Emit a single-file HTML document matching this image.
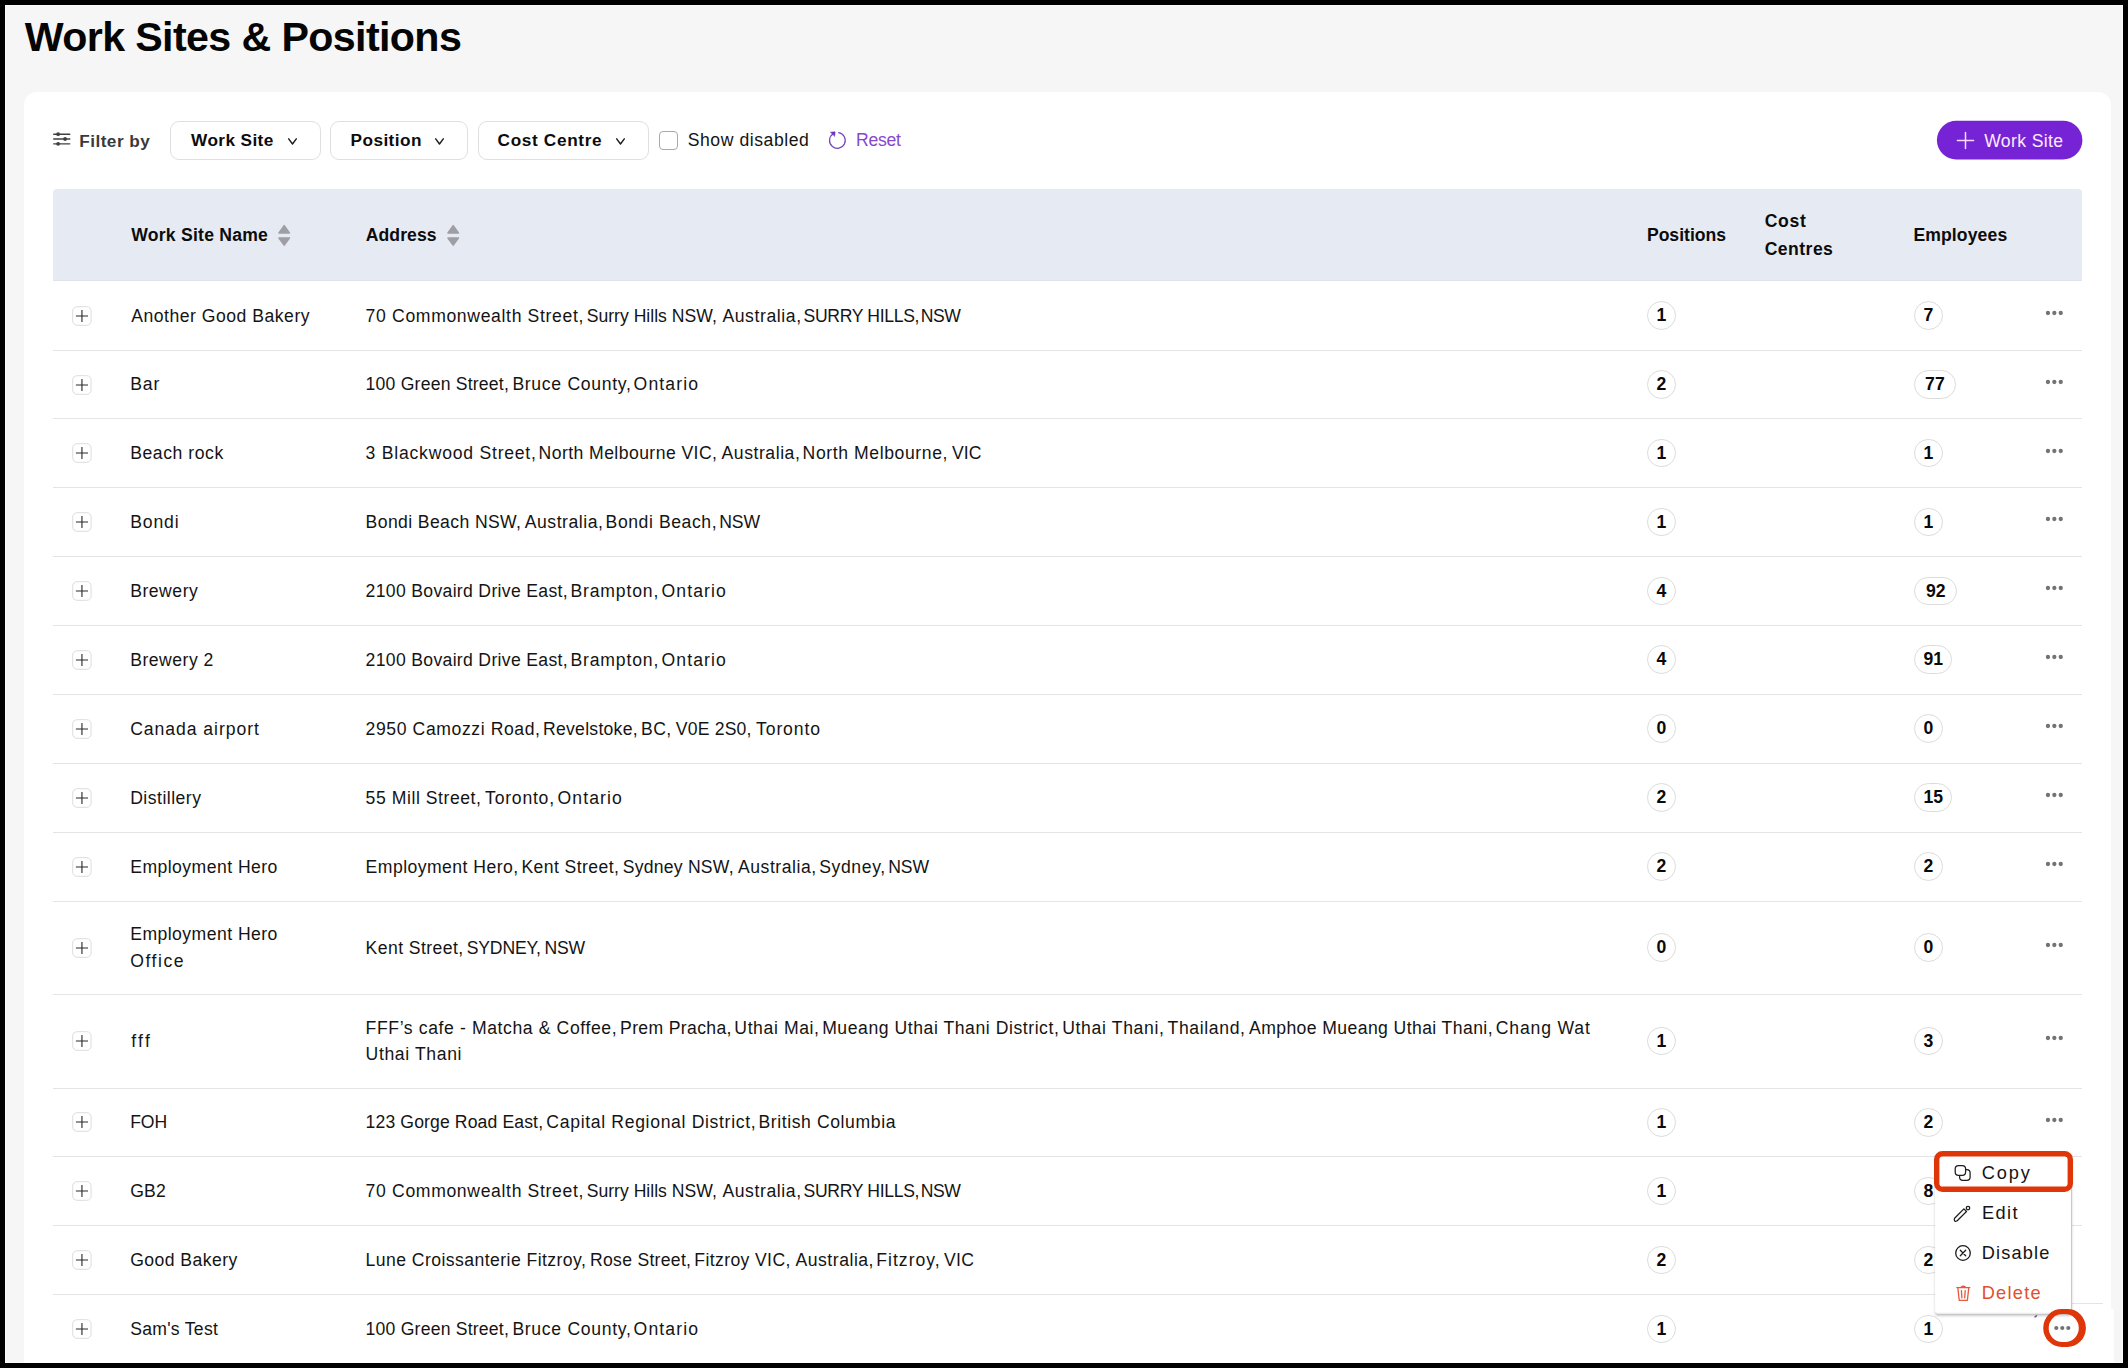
<!DOCTYPE html>
<html lang="en">
<head>
<meta charset="utf-8">
<title>Work Sites &amp; Positions</title>
<style>
*{box-sizing:border-box;margin:0;padding:0}
html,body{width:2128px;height:1368px;overflow:hidden;background:#000}
body{position:relative;font-family:"Liberation Sans",sans-serif;color:#141414;font-size:17.6px}
.page{position:absolute;left:5px;top:5px;width:2118px;height:1358px;background:#f6f6f6;overflow:hidden;box-shadow:inset 1px 1px 0 #fcfcfc,inset -1px -1px 0 #fcfcfc}
.page *{position:absolute}
.g{left:0;top:0;width:0;height:0}
.card{left:19px;top:86.5px;width:2087px;height:1300px;background:#fff;border-radius:13px 13px 0 0}
.cardx{left:2100px;top:1304px;width:8.5px;height:60px;background:#fff}
.tx{white-space:pre;line-height:24px;height:24px;font-weight:400;font-style:normal}
.fbtn{top:116px;height:38.5px;border:1px solid #dfdfdf;border-radius:9px;background:#fff}
.chk{left:654px;top:125.8px;width:19.2px;height:19.2px;border:1.2px solid #a9a9a9;border-radius:4px;background:#fff}
.theadbg{left:48px;top:184.3px;width:2029px;height:92px;background:#e6eaf2;border-radius:4px 4px 0 0;box-shadow:inset 0 -1px 0 #e0e4ea}
.sep{left:48px;width:2029px;height:1px;background:#e4e4e5}
.bdg{height:28.8px;border:1px solid #dcdcdc;border-radius:15px;background:#fff;font-weight:700;font-size:17.6px;line-height:26.8px;text-align:center;color:#0a0a0a}
.menubg{left:1929.7px;top:1147px;width:136.6px;height:162px;background:#fff;border-radius:3px;box-shadow:1px 1px 0 -0.2px #c4c5c9,0.5px 1.5px 2.5px rgba(0,0,0,.2),inset 0 -1.5px 1.5px -0.6px rgba(0,0,0,.1)}
svg{overflow:visible}
</style>
</head>
<body>
<div class="page">
<header class="g"><h1 class="tx title" style="left:19.70px;top:20.12px;letter-spacing:-0.619px;font-size:41.2px;font-weight:700;color:#050505">Work Sites &amp; Positions</h1></header>
<main class="g">
<div class="card"></div>
<div class="cardx"></div>
<section class="g filters">
<svg style="left:47.5px;top:126px" width="18" height="16" viewBox="0 0 18 16" fill="none" stroke="#404040" stroke-width="1.35" stroke-linecap="round"><path d="M0.7 3.2H16.8M0.7 8H16.8M0.7 12.8H16.8"/><circle cx="5.1" cy="3.2" r="1.9" fill="#404040" stroke="none"/><circle cx="12.1" cy="8" r="1.9" fill="#404040" stroke="none"/><circle cx="5.1" cy="12.8" r="1.9" fill="#404040" stroke="none"/></svg>
<span class="tx" style="left:74.20px;top:124.04px;letter-spacing:0.475px;font-size:17.2px;font-weight:700;color:#3a3a3a">Filter by</span>
<div class="g dd">
<div class="fbtn" style="left:165.2px;width:150.6px"></div>
<span class="tx" style="left:186.10px;top:122.74px;letter-spacing:0.400px;font-size:17.2px;font-weight:700;color:#0c0c0c">Work Site</span>
<svg style="left:283.4px;top:132.5px" width="9" height="7" viewBox="0 0 9 7" fill="none" stroke="#1a1a1a" stroke-width="1.4" stroke-linecap="round" stroke-linejoin="round"><path d="M0.7 0.8L4.5 6L8.3 0.8"/></svg>
</div>
<div class="g dd">
<div class="fbtn" style="left:325.4px;width:137.4px"></div>
<span class="tx" style="left:345.50px;top:122.74px;letter-spacing:0.457px;font-size:17.2px;font-weight:700;color:#0c0c0c">Position</span>
<svg style="left:430.4px;top:132.5px" width="9" height="7" viewBox="0 0 9 7" fill="none" stroke="#1a1a1a" stroke-width="1.4" stroke-linecap="round" stroke-linejoin="round"><path d="M0.7 0.8L4.5 6L8.3 0.8"/></svg>
</div>
<div class="g dd">
<div class="fbtn" style="left:473.2px;width:170.5px"></div>
<span class="tx" style="left:492.60px;top:122.74px;letter-spacing:0.660px;font-size:17.2px;font-weight:700;color:#0c0c0c">Cost Centre</span>
<svg style="left:610.7px;top:132.5px" width="9" height="7" viewBox="0 0 9 7" fill="none" stroke="#1a1a1a" stroke-width="1.4" stroke-linecap="round" stroke-linejoin="round"><path d="M0.7 0.8L4.5 6L8.3 0.8"/></svg>
</div>
<label class="g"><span class="chk"></span><span class="tx" style="left:682.70px;top:122.50px;letter-spacing:0.558px">Show disabled</span></label>
<div class="g reset"><svg style="left:815px;top:119px" width="36" height="32" viewBox="0 0 36 32" fill="none" stroke="#7747b8" stroke-width="1.25" stroke-linecap="round"><path d="M18.63 8.65A7.85 7.85 0 1 1 13.24 9.74"/><path d="M10.7 8.2L15.1 7.85L14.7 12Z" fill="#6a2fc0" stroke="#6a2fc0" stroke-width="0.6" stroke-linejoin="round"/></svg>
<span class="tx" style="left:851.00px;top:123.10px;letter-spacing:-0.250px;color:#8748cf">Reset</span></div>
<div class="g add"><svg style="left:1930px;top:114px" width="150" height="44" viewBox="0 0 150 44"><rect x="1.9" y="1.8" width="145.5" height="38.7" rx="19.35" fill="#7623d6"/></svg>
<svg style="left:1951.7px;top:127.1px" width="17" height="17" viewBox="0 0 17 17" stroke="#fbdcff" stroke-width="1.5" stroke-linecap="round"><path d="M8.5 0.4V16.6M0.4 8.5H16.6"/></svg>
<span class="tx" style="left:1979.20px;top:123.60px;letter-spacing:0.375px;color:#fdeaff">Work Site</span></div>
</section>
<section class="g table">
<div class="g thead"><div class="theadbg"></div>
<span class="tx" style="left:126.20px;top:217.90px;letter-spacing:0.238px;font-weight:700;color:#0c0c0c">Work Site Name</span>
<svg style='left:272.70px;top:219.20px' width='12.4' height='23' viewBox='0 0 12.4 23' fill='#9e9ea4' stroke='#9e9ea4' stroke-width='1.6' stroke-linejoin='round'><path d='M6.2 1.7L11.4 8.9H1Z'/><path d='M6.2 21.1L11.4 14H1Z'/></svg>
<span class="tx" style="left:360.80px;top:217.90px;letter-spacing:0.050px;font-weight:700;color:#0c0c0c">Address</span>
<svg style='left:441.50px;top:219.20px' width='12.4' height='23' viewBox='0 0 12.4 23' fill='#9e9ea4' stroke='#9e9ea4' stroke-width='1.6' stroke-linejoin='round'><path d='M6.2 1.7L11.4 8.9H1Z'/><path d='M6.2 21.1L11.4 14H1Z'/></svg>
<span class="tx" style="left:1641.90px;top:217.90px;letter-spacing:0.000px;font-weight:700;color:#0c0c0c">Positions</span>
<div class="g"><span class="tx" style="left:1759.70px;top:204.20px;letter-spacing:0.700px;font-weight:700;color:#0c0c0c">Cost </span><span class="tx" style="left:1759.70px;top:231.70px;letter-spacing:0.450px;font-weight:700;color:#0c0c0c">Centres</span></div>
<span class="tx" style="left:1908.40px;top:217.90px;letter-spacing:0.112px;font-weight:700;color:#0c0c0c">Employees</span>
</div>
<div class="g tbody">
<div class="g row">
<svg class='exp' style='left:66.00px;top:299.75px' width='22' height='22' viewBox='0 0 22 22' fill='none'><rect x='1.7' y='1.7' width='18.4' height='18.6' rx='4.4' fill='#fff' stroke='#dddddd' stroke-width='1'/><path d='M4.9 11H17M10.95 4.9V17.1' stroke='#2a2a2a' stroke-width='1.12'/></svg>
<span class="tx" style="left:126.20px;top:298.80px;letter-spacing:0.511px">Another Good Bakery</span>
<div class="g addr">
<span class="tx" style="left:360.62px;top:298.80px;letter-spacing:0.652px">70 Commonwealth Street, </span>
<span class="tx" style="left:581.67px;top:298.80px;letter-spacing:0.008px">Surry Hills NSW, </span>
<span class="tx" style="left:717.41px;top:298.80px;letter-spacing:0.588px">Australia, </span>
<span class="tx" style="left:798.51px;top:298.80px;letter-spacing:-0.329px">SURRY HILLS, </span>
<span class="tx" style="left:915.80px;top:298.80px;letter-spacing:-0.451px">NSW</span>
</div>
<div class='bdg' style='left:1642.00px;top:296.15px;width:28.8px'>1</div>
<div class='bdg' style='left:1909.10px;top:296.15px;width:28.8px'>7</div>
<svg class='dots' style='left:2038.00px;top:303.95px' width='24' height='8' viewBox='0 0 24 8' fill='#737373'><circle cx='4.95' cy='4' r='2.15'/><circle cx='11.35' cy='4' r='2.15'/><circle cx='17.75' cy='4' r='2.15'/></svg>
<div class='sep' style='top:345px'></div>
</div>
<div class="g row">
<svg class='exp' style='left:66.00px;top:368.55px' width='22' height='22' viewBox='0 0 22 22' fill='none'><rect x='1.7' y='1.7' width='18.4' height='18.6' rx='4.4' fill='#fff' stroke='#dddddd' stroke-width='1'/><path d='M4.9 11H17M10.95 4.9V17.1' stroke='#2a2a2a' stroke-width='1.12'/></svg>
<span class="tx" style="left:125.20px;top:366.80px;letter-spacing:0.900px">Bar</span>
<div class="g addr">
<span class="tx" style="left:360.62px;top:366.80px;letter-spacing:0.210px">100 Green Street, </span>
<span class="tx" style="left:507.38px;top:366.80px;letter-spacing:0.699px">Bruce County, </span>
<span class="tx" style="left:628.59px;top:366.80px;letter-spacing:1.143px">Ontario</span>
</div>
<div class='bdg' style='left:1642.00px;top:364.95px;width:28.8px'>2</div>
<div class='bdg' style='left:1909.10px;top:364.95px;width:41.6px'>77</div>
<svg class='dots' style='left:2038.00px;top:372.75px' width='24' height='8' viewBox='0 0 24 8' fill='#737373'><circle cx='4.95' cy='4' r='2.15'/><circle cx='11.35' cy='4' r='2.15'/><circle cx='17.75' cy='4' r='2.15'/></svg>
<div class='sep' style='top:413px'></div>
</div>
<div class="g row">
<svg class='exp' style='left:66.00px;top:437.30px' width='22' height='22' viewBox='0 0 22 22' fill='none'><rect x='1.7' y='1.7' width='18.4' height='18.6' rx='4.4' fill='#fff' stroke='#dddddd' stroke-width='1'/><path d='M4.9 11H17M10.95 4.9V17.1' stroke='#2a2a2a' stroke-width='1.12'/></svg>
<span class="tx" style="left:125.20px;top:435.90px;letter-spacing:0.556px">Beach rock</span>
<div class="g addr">
<span class="tx" style="left:360.62px;top:435.90px;letter-spacing:0.768px">3 Blackwood Street, </span>
<span class="tx" style="left:533.55px;top:435.90px;letter-spacing:0.434px">North Melbourne VIC, </span>
<span class="tx" style="left:716.50px;top:435.90px;letter-spacing:0.555px">Australia, </span>
<span class="tx" style="left:797.61px;top:435.90px;letter-spacing:0.590px">North Melbourne, </span>
<span class="tx" style="left:946.88px;top:435.90px;letter-spacing:0.135px">VIC</span>
</div>
<div class='bdg' style='left:1642.00px;top:433.70px;width:28.8px'>1</div>
<div class='bdg' style='left:1909.10px;top:433.70px;width:28.8px'>1</div>
<svg class='dots' style='left:2038.00px;top:441.50px' width='24' height='8' viewBox='0 0 24 8' fill='#737373'><circle cx='4.95' cy='4' r='2.15'/><circle cx='11.35' cy='4' r='2.15'/><circle cx='17.75' cy='4' r='2.15'/></svg>
<div class='sep' style='top:482px'></div>
</div>
<div class="g row">
<svg class='exp' style='left:66.00px;top:506.20px' width='22' height='22' viewBox='0 0 22 22' fill='none'><rect x='1.7' y='1.7' width='18.4' height='18.6' rx='4.4' fill='#fff' stroke='#dddddd' stroke-width='1'/><path d='M4.9 11H17M10.95 4.9V17.1' stroke='#2a2a2a' stroke-width='1.12'/></svg>
<span class="tx" style="left:125.20px;top:504.80px;letter-spacing:0.875px">Bondi</span>
<div class="g addr">
<span class="tx" style="left:360.62px;top:504.80px;letter-spacing:0.385px">Bondi Beach NSW, </span>
<span class="tx" style="left:519.81px;top:504.80px;letter-spacing:0.521px">Australia, </span>
<span class="tx" style="left:600.62px;top:504.80px;letter-spacing:0.570px">Bondi Beach, </span>
<span class="tx" style="left:714.30px;top:504.80px;letter-spacing:-0.150px">NSW</span>
</div>
<div class='bdg' style='left:1642.00px;top:502.60px;width:28.8px'>1</div>
<div class='bdg' style='left:1909.10px;top:502.60px;width:28.8px'>1</div>
<svg class='dots' style='left:2038.00px;top:510.40px' width='24' height='8' viewBox='0 0 24 8' fill='#737373'><circle cx='4.95' cy='4' r='2.15'/><circle cx='11.35' cy='4' r='2.15'/><circle cx='17.75' cy='4' r='2.15'/></svg>
<div class='sep' style='top:551px'></div>
</div>
<div class="g row">
<svg class='exp' style='left:66.00px;top:575.15px' width='22' height='22' viewBox='0 0 22 22' fill='none'><rect x='1.7' y='1.7' width='18.4' height='18.6' rx='4.4' fill='#fff' stroke='#dddddd' stroke-width='1'/><path d='M4.9 11H17M10.95 4.9V17.1' stroke='#2a2a2a' stroke-width='1.12'/></svg>
<span class="tx" style="left:125.20px;top:573.90px;letter-spacing:0.517px">Brewery</span>
<div class="g addr">
<span class="tx" style="left:360.62px;top:573.90px;letter-spacing:0.322px">2100 Bovaird Drive East, </span>
<span class="tx" style="left:565.43px;top:573.90px;letter-spacing:0.839px">Brampton, </span>
<span class="tx" style="left:656.56px;top:573.90px;letter-spacing:1.093px">Ontario</span>
</div>
<div class='bdg' style='left:1642.00px;top:571.55px;width:28.8px'>4</div>
<div class='bdg' style='left:1909.10px;top:571.55px;width:43.4px'>92</div>
<svg class='dots' style='left:2038.00px;top:579.35px' width='24' height='8' viewBox='0 0 24 8' fill='#737373'><circle cx='4.95' cy='4' r='2.15'/><circle cx='11.35' cy='4' r='2.15'/><circle cx='17.75' cy='4' r='2.15'/></svg>
<div class='sep' style='top:620px'></div>
</div>
<div class="g row">
<svg class='exp' style='left:66.00px;top:644.00px' width='22' height='22' viewBox='0 0 22 22' fill='none'><rect x='1.7' y='1.7' width='18.4' height='18.6' rx='4.4' fill='#fff' stroke='#dddddd' stroke-width='1'/><path d='M4.9 11H17M10.95 4.9V17.1' stroke='#2a2a2a' stroke-width='1.12'/></svg>
<span class="tx" style="left:125.20px;top:642.70px;letter-spacing:0.500px">Brewery 2</span>
<div class="g addr">
<span class="tx" style="left:360.62px;top:642.70px;letter-spacing:0.322px">2100 Bovaird Drive East, </span>
<span class="tx" style="left:565.43px;top:642.70px;letter-spacing:0.839px">Brampton, </span>
<span class="tx" style="left:656.56px;top:642.70px;letter-spacing:1.093px">Ontario</span>
</div>
<div class='bdg' style='left:1642.00px;top:640.40px;width:28.8px'>4</div>
<div class='bdg' style='left:1909.10px;top:640.40px;width:38.2px'>91</div>
<svg class='dots' style='left:2038.00px;top:648.20px' width='24' height='8' viewBox='0 0 24 8' fill='#737373'><circle cx='4.95' cy='4' r='2.15'/><circle cx='11.35' cy='4' r='2.15'/><circle cx='17.75' cy='4' r='2.15'/></svg>
<div class='sep' style='top:689px'></div>
</div>
<div class="g row">
<svg class='exp' style='left:66.00px;top:712.80px' width='22' height='22' viewBox='0 0 22 22' fill='none'><rect x='1.7' y='1.7' width='18.4' height='18.6' rx='4.4' fill='#fff' stroke='#dddddd' stroke-width='1'/><path d='M4.9 11H17M10.95 4.9V17.1' stroke='#2a2a2a' stroke-width='1.12'/></svg>
<span class="tx" style="left:125.20px;top:711.80px;letter-spacing:0.946px">Canada airport</span>
<div class="g addr">
<span class="tx" style="left:360.62px;top:711.80px;letter-spacing:0.590px">2950 Camozzi Road, </span>
<span class="tx" style="left:538.06px;top:711.80px;letter-spacing:0.263px">Revelstoke, </span>
<span class="tx" style="left:636.11px;top:711.80px;letter-spacing:0.335px">BC, </span>
<span class="tx" style="left:670.79px;top:711.80px;letter-spacing:0.184px">V0E 2S0, </span>
<span class="tx" style="left:751.09px;top:711.80px;letter-spacing:0.860px">Toronto</span>
</div>
<div class='bdg' style='left:1642.00px;top:709.20px;width:28.8px'>0</div>
<div class='bdg' style='left:1909.10px;top:709.20px;width:28.8px'>0</div>
<svg class='dots' style='left:2038.00px;top:717.00px' width='24' height='8' viewBox='0 0 24 8' fill='#737373'><circle cx='4.95' cy='4' r='2.15'/><circle cx='11.35' cy='4' r='2.15'/><circle cx='17.75' cy='4' r='2.15'/></svg>
<div class='sep' style='top:758px'></div>
</div>
<div class="g row">
<svg class='exp' style='left:66.00px;top:781.70px' width='22' height='22' viewBox='0 0 22 22' fill='none'><rect x='1.7' y='1.7' width='18.4' height='18.6' rx='4.4' fill='#fff' stroke='#dddddd' stroke-width='1'/><path d='M4.9 11H17M10.95 4.9V17.1' stroke='#2a2a2a' stroke-width='1.12'/></svg>
<span class="tx" style="left:125.20px;top:780.90px;letter-spacing:0.478px">Distillery</span>
<div class="g addr">
<span class="tx" style="left:360.62px;top:780.90px;letter-spacing:0.556px">55 Mill Street, </span>
<span class="tx" style="left:480.11px;top:780.90px;letter-spacing:0.767px">Toronto, </span>
<span class="tx" style="left:552.50px;top:780.90px;letter-spacing:1.093px">Ontario</span>
</div>
<div class='bdg' style='left:1642.00px;top:778.10px;width:28.8px'>2</div>
<div class='bdg' style='left:1909.10px;top:778.10px;width:38.2px'>15</div>
<svg class='dots' style='left:2038.00px;top:785.90px' width='24' height='8' viewBox='0 0 24 8' fill='#737373'><circle cx='4.95' cy='4' r='2.15'/><circle cx='11.35' cy='4' r='2.15'/><circle cx='17.75' cy='4' r='2.15'/></svg>
<div class='sep' style='top:827px'></div>
</div>
<div class="g row">
<svg class='exp' style='left:66.00px;top:850.75px' width='22' height='22' viewBox='0 0 22 22' fill='none'><rect x='1.7' y='1.7' width='18.4' height='18.6' rx='4.4' fill='#fff' stroke='#dddddd' stroke-width='1'/><path d='M4.9 11H17M10.95 4.9V17.1' stroke='#2a2a2a' stroke-width='1.12'/></svg>
<span class="tx" style="left:125.20px;top:849.60px;letter-spacing:0.457px">Employment Hero</span>
<div class="g addr">
<span class="tx" style="left:360.62px;top:849.60px;letter-spacing:0.452px">Employment Hero, </span>
<span class="tx" style="left:516.41px;top:849.60px;letter-spacing:0.422px">Kent Street, </span>
<span class="tx" style="left:617.76px;top:849.60px;letter-spacing:0.227px">Sydney NSW, </span>
<span class="tx" style="left:733.05px;top:849.60px;letter-spacing:0.521px">Australia, </span>
<span class="tx" style="left:814.15px;top:849.60px;letter-spacing:0.627px">Sydney, </span>
<span class="tx" style="left:883.32px;top:849.60px;letter-spacing:-0.150px">NSW</span>
</div>
<div class='bdg' style='left:1642.00px;top:847.15px;width:28.8px'>2</div>
<div class='bdg' style='left:1909.10px;top:847.15px;width:28.8px'>2</div>
<svg class='dots' style='left:2038.00px;top:854.95px' width='24' height='8' viewBox='0 0 24 8' fill='#737373'><circle cx='4.95' cy='4' r='2.15'/><circle cx='11.35' cy='4' r='2.15'/><circle cx='17.75' cy='4' r='2.15'/></svg>
<div class='sep' style='top:896px'></div>
</div>
<div class="g row">
<svg class='exp' style='left:66.00px;top:931.80px' width='22' height='22' viewBox='0 0 22 22' fill='none'><rect x='1.7' y='1.7' width='18.4' height='18.6' rx='4.4' fill='#fff' stroke='#dddddd' stroke-width='1'/><path d='M4.9 11H17M10.95 4.9V17.1' stroke='#2a2a2a' stroke-width='1.12'/></svg>
<div class="g"><span class="tx" style="left:125.20px;top:917.20px;letter-spacing:0.457px">Employment Hero </span><span class="tx" style="left:125.20px;top:943.70px;letter-spacing:1.560px">Office</span></div>
<div class="g addr">
<span class="tx" style="left:360.62px;top:930.80px;letter-spacing:0.422px">Kent Street, </span>
<span class="tx" style="left:461.67px;top:930.80px;letter-spacing:-0.137px">SYDNEY, </span>
<span class="tx" style="left:539.56px;top:930.80px;letter-spacing:-0.301px">NSW</span>
</div>
<div class='bdg' style='left:1642.00px;top:928.20px;width:28.8px'>0</div>
<div class='bdg' style='left:1909.10px;top:928.20px;width:28.8px'>0</div>
<svg class='dots' style='left:2038.00px;top:936.00px' width='24' height='8' viewBox='0 0 24 8' fill='#737373'><circle cx='4.95' cy='4' r='2.15'/><circle cx='11.35' cy='4' r='2.15'/><circle cx='17.75' cy='4' r='2.15'/></svg>
<div class='sep' style='top:989px'></div>
</div>
<div class="g row">
<svg class='exp' style='left:66.00px;top:1025.25px' width='22' height='22' viewBox='0 0 22 22' fill='none'><rect x='1.7' y='1.7' width='18.4' height='18.6' rx='4.4' fill='#fff' stroke='#dddddd' stroke-width='1'/><path d='M4.9 11H17M10.95 4.9V17.1' stroke='#2a2a2a' stroke-width='1.12'/></svg>
<span class="tx" style="left:126.20px;top:1023.60px;letter-spacing:2.300px">fff</span>
<div class="g addr">
<span class="tx" style="left:360.62px;top:1010.60px;letter-spacing:0.608px">FFF’s cafe - Matcha &amp; Coffee, </span>
<span class="tx" style="left:615.05px;top:1010.60px;letter-spacing:0.352px">Prem Pracha, </span>
<span class="tx" style="left:729.34px;top:1010.60px;letter-spacing:0.601px">Uthai Mai, </span>
<span class="tx" style="left:817.16px;top:1010.60px;letter-spacing:0.555px">Mueang Uthai Thani District, </span>
<span class="tx" style="left:1057.16px;top:1010.60px;letter-spacing:0.659px">Uthai Thani, </span>
<span class="tx" style="left:1162.52px;top:1010.60px;letter-spacing:0.636px">Thailand, </span>
<span class="tx" style="left:1244.02px;top:1010.60px;letter-spacing:0.404px">Amphoe Mueang Uthai Thani, </span>
<span class="tx" style="left:1490.84px;top:1010.60px;letter-spacing:0.829px">Chang Wat </span>
<span class="tx" style="left:360.60px;top:1037.10px;letter-spacing:0.620px">Uthai Thani</span>
</div>
<div class='bdg' style='left:1642.00px;top:1021.65px;width:28.8px'>1</div>
<div class='bdg' style='left:1909.10px;top:1021.65px;width:28.8px'>3</div>
<svg class='dots' style='left:2038.00px;top:1029.45px' width='24' height='8' viewBox='0 0 24 8' fill='#737373'><circle cx='4.95' cy='4' r='2.15'/><circle cx='11.35' cy='4' r='2.15'/><circle cx='17.75' cy='4' r='2.15'/></svg>
<div class='sep' style='top:1083px'></div>
</div>
<div class="g row">
<svg class='exp' style='left:66.00px;top:1106.35px' width='22' height='22' viewBox='0 0 22 22' fill='none'><rect x='1.7' y='1.7' width='18.4' height='18.6' rx='4.4' fill='#fff' stroke='#dddddd' stroke-width='1'/><path d='M4.9 11H17M10.95 4.9V17.1' stroke='#2a2a2a' stroke-width='1.12'/></svg>
<span class="tx" style="left:125.20px;top:1104.80px;letter-spacing:-0.100px">FOH</span>
<div class="g addr">
<span class="tx" style="left:360.62px;top:1104.80px;letter-spacing:0.123px">123 Gorge Road East, </span>
<span class="tx" style="left:541.37px;top:1104.80px;letter-spacing:0.665px">Capital Regional District, </span>
<span class="tx" style="left:753.40px;top:1104.80px;letter-spacing:0.596px">British Columbia</span>
</div>
<div class='bdg' style='left:1642.00px;top:1102.75px;width:28.8px'>1</div>
<div class='bdg' style='left:1909.10px;top:1102.75px;width:28.8px'>2</div>
<svg class='dots' style='left:2038.00px;top:1110.55px' width='24' height='8' viewBox='0 0 24 8' fill='#737373'><circle cx='4.95' cy='4' r='2.15'/><circle cx='11.35' cy='4' r='2.15'/><circle cx='17.75' cy='4' r='2.15'/></svg>
<div class='sep' style='top:1151px'></div>
</div>
<div class="g row">
<svg class='exp' style='left:66.00px;top:1175.10px' width='22' height='22' viewBox='0 0 22 22' fill='none'><rect x='1.7' y='1.7' width='18.4' height='18.6' rx='4.4' fill='#fff' stroke='#dddddd' stroke-width='1'/><path d='M4.9 11H17M10.95 4.9V17.1' stroke='#2a2a2a' stroke-width='1.12'/></svg>
<span class="tx" style="left:125.20px;top:1173.90px;letter-spacing:0.150px">GB2</span>
<div class="g addr">
<span class="tx" style="left:360.62px;top:1173.90px;letter-spacing:0.652px">70 Commonwealth Street, </span>
<span class="tx" style="left:581.67px;top:1173.90px;letter-spacing:0.008px">Surry Hills NSW, </span>
<span class="tx" style="left:717.41px;top:1173.90px;letter-spacing:0.588px">Australia, </span>
<span class="tx" style="left:798.51px;top:1173.90px;letter-spacing:-0.329px">SURRY HILLS, </span>
<span class="tx" style="left:915.80px;top:1173.90px;letter-spacing:-0.451px">NSW</span>
</div>
<div class='bdg' style='left:1642.00px;top:1171.50px;width:28.8px'>1</div>
<div class='bdg' style='left:1909.10px;top:1171.50px;width:28.8px'>8</div>
<svg class='dots' style='left:2038.00px;top:1179.30px' width='24' height='8' viewBox='0 0 24 8' fill='#737373'><circle cx='4.95' cy='4' r='2.15'/><circle cx='11.35' cy='4' r='2.15'/><circle cx='17.75' cy='4' r='2.15'/></svg>
<div class='sep' style='top:1220px'></div>
</div>
<div class="g row">
<svg class='exp' style='left:66.00px;top:1244.20px' width='22' height='22' viewBox='0 0 22 22' fill='none'><rect x='1.7' y='1.7' width='18.4' height='18.6' rx='4.4' fill='#fff' stroke='#dddddd' stroke-width='1'/><path d='M4.9 11H17M10.95 4.9V17.1' stroke='#2a2a2a' stroke-width='1.12'/></svg>
<span class="tx" style="left:125.20px;top:1242.80px;letter-spacing:0.440px">Good Bakery</span>
<div class="g addr">
<span class="tx" style="left:360.62px;top:1242.80px;letter-spacing:0.436px">Lune Croissanterie Fitzroy, </span>
<span class="tx" style="left:584.98px;top:1242.80px;letter-spacing:0.295px">Rose Street, </span>
<span class="tx" style="left:689.34px;top:1242.80px;letter-spacing:0.376px">Fitzroy VIC, </span>
<span class="tx" style="left:790.49px;top:1242.80px;letter-spacing:0.521px">Australia, </span>
<span class="tx" style="left:871.29px;top:1242.80px;letter-spacing:1.008px">Fitzroy, </span>
<span class="tx" style="left:939.06px;top:1242.80px;letter-spacing:0.286px">VIC</span>
</div>
<div class='bdg' style='left:1642.00px;top:1240.60px;width:28.8px'>2</div>
<div class='bdg' style='left:1909.10px;top:1240.60px;width:28.8px'>2</div>
<svg class='dots' style='left:2038.00px;top:1248.40px' width='24' height='8' viewBox='0 0 24 8' fill='#737373'><circle cx='4.95' cy='4' r='2.15'/><circle cx='11.35' cy='4' r='2.15'/><circle cx='17.75' cy='4' r='2.15'/></svg>
<div class='sep' style='top:1289px;width:2019px'></div>
<div class='sep' style='top:1298px;left:2067px;width:31px'></div>
</div>
<div class="g row">
<svg class='exp' style='left:66.00px;top:1313.15px' width='22' height='22' viewBox='0 0 22 22' fill='none'><rect x='1.7' y='1.7' width='18.4' height='18.6' rx='4.4' fill='#fff' stroke='#dddddd' stroke-width='1'/><path d='M4.9 11H17M10.95 4.9V17.1' stroke='#2a2a2a' stroke-width='1.12'/></svg>
<span class="tx" style="left:125.20px;top:1311.90px;letter-spacing:0.278px">Sam's Test</span>
<div class="g addr">
<span class="tx" style="left:360.62px;top:1311.90px;letter-spacing:0.210px">100 Green Street, </span>
<span class="tx" style="left:507.38px;top:1311.90px;letter-spacing:0.699px">Bruce County, </span>
<span class="tx" style="left:628.59px;top:1311.90px;letter-spacing:1.143px">Ontario</span>
</div>
<div class='bdg' style='left:1642.00px;top:1309.55px;width:28.8px'>1</div>
<div class='bdg' style='left:1909.10px;top:1309.55px;width:28.8px'>1</div>
<svg class='dots' style='left:2046.00px;top:1318.90px' width='24' height='8' viewBox='0 0 24 8' fill='#737373'><circle cx='5.3' cy='4' r='2.1'/><circle cx='11.3' cy='4' r='2.1'/><circle cx='17.3' cy='4' r='2.1'/></svg>
</div>
</div>
</section>
<div class="g menu"><div class="menubg"></div>
<svg style="left:1925px;top:1140px" width="150" height="56" viewBox="0 0 150 56" fill="none"><rect x="6.7" y="8.8" width="133.6" height="35.4" rx="5.8" stroke="#de3509" stroke-width="5.4"/></svg>
<div class="g item"><svg style='left:1949.00px;top:1159.00px' width='18' height='18' viewBox='0 0 18 18' fill='#fff' stroke='#1c1c1c' stroke-width='1.25'><rect x='5.6' y='5.6' width='10.5' height='10.7' rx='3.3'/><rect x='1.2' y='1.5' width='10.4' height='9.9' rx='3.3'/></svg><span class="tx" style="left:1976.70px;top:1155.69px;letter-spacing:1.900px;font-size:18.2px">Copy</span></div>
<div class="g item"><svg style='left:1945.00px;top:1195.00px' width='24' height='24' viewBox='0 0 24 24' fill='none' stroke='#1c1c1c' stroke-width='1.25' stroke-linejoin='round' stroke-linecap='round'><path d='M13.9 8.9L16.5 11.5L7.2 20.8Q5.2 21.9 4.6 20.8Q3.9 19.8 4.6 18.2Z'/><circle cx='18' cy='8' r='1.75'/></svg><span class="tx" style="left:1977.10px;top:1195.59px;letter-spacing:1.333px;font-size:18.2px">Edit</span></div>
<div class="g item"><svg style='left:1949.70px;top:1239.80px' width='16' height='16' viewBox='0 0 16 16' fill='none' stroke='#1c1c1c' stroke-width='1.3' stroke-linecap='round'><circle cx='8' cy='8' r='7.3'/><path d='M5.3 5.3L10.7 10.7M10.7 5.3L5.3 10.7'/></svg><span class="tx" style="left:1976.70px;top:1235.59px;letter-spacing:1.150px;font-size:18.2px">Disable</span></div>
<div class="g item"><svg style='left:1950.60px;top:1279.80px' width='15' height='16' viewBox='0 0 15 16' fill='none' stroke='#e5593c' stroke-width='1.3' stroke-linecap='round' stroke-linejoin='round'><path d='M0.8 2.6H13.8'/><path d='M5 2.2Q7.3 0.2 9.6 2.2' /><path d='M1.9 3.4L3.2 15.3H11.4L12.7 3.4'/><path d='M5.4 5.6L5.9 12.9M9.2 5.6L8.7 12.9'/></svg><span class="tx" style="left:1976.70px;top:1275.79px;letter-spacing:1.280px;font-size:18.2px;color:#e0502d">Delete</span></div>
</div>
<svg style="left:2027px;top:1308px" width="8" height="6" viewBox="0 0 8 6"><path d="M2 4.1Q3.6 2 5.2 2.1Q5.6 3.4 4 4.2Q2.6 4.6 2 4.1Z" fill="#6b5a7a"/></svg>
<svg style="left:2035px;top:1300px" width="54" height="50" viewBox="0 0 54 50"><path fill="#de3509" fill-rule="evenodd" d="M21.7 3.9H27.4A18.5 19 0 0 1 45.9 22.9A18.5 19 0 0 1 27.4 41.9H21.7A18.5 19 0 0 1 3.2 22.9A18.5 19 0 0 1 21.7 3.9ZM22.3 9.1H25.2A13.6 13.95 0 0 1 38.8 23.05A13.6 13.95 0 0 1 25.2 37H22.3A13.6 13.95 0 0 1 8.7 23.05A13.6 13.95 0 0 1 22.3 9.1Z"/></svg>
</main>
</div>
</body>
</html>
